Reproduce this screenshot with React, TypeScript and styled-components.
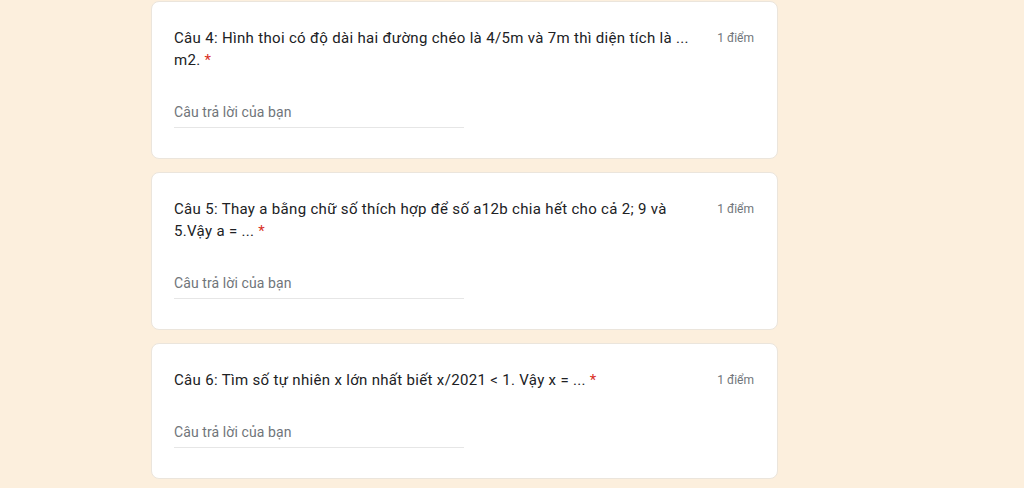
import styled, { createGlobalStyle } from 'styled-components';

const GlobalStyle = createGlobalStyle`
    html, body {
        margin: 0;
        padding: 0;
        background-color: #fcefdd;
        font-family: Roboto, 'Noto Sans', Arial, sans-serif;
    }
`;

const Page = styled.div`
    width: 627px;
    margin-left: 151px;
    padding-top: 1px;
    display: flex;
    flex-direction: column;
    gap: 13px;
`;

const Card = styled.div`
    background-color: #ffffff;
    border: 1px solid #ebe5dc;
    border-radius: 8px;
    padding: 25px 23px 30px 22px;
`;

const Header = styled.div`
    display: flex;
    align-items: flex-start;
    gap: 14px;
`;

const Question = styled.div`
    flex: 1;
    color: #202124;
    font-size: 15px;
    line-height: 22px;
    letter-spacing: 0.32px;
`;

const Required = styled.span`
    color: #d93025;
    margin-left: 4px;
`;

const Points = styled.div`
    color: #70757a;
    font-size: 12px;
    line-height: 22px;
    white-space: nowrap;
`;

const AnswerInput = styled.input`
    display: block;
    margin-top: 25px;
    width: 50%;
    height: 32px;
    box-sizing: border-box;
    padding: 0;
    border: none;
    border-bottom: 1px solid #e6e6e6;
    outline: none;
    background: transparent;
    font-family: inherit;
    font-size: 14px;
    letter-spacing: 0.1px;
    color: #202124;
    &::placeholder {
        color: #70757a;
    }
`;

const questions = [
    'Câu 4: Hình thoi có độ dài hai đường chéo là 4/5m và 7m thì diện tích là ... m2.',
    'Câu 5: Thay a bằng chữ số thích hợp để số a12b chia hết cho cả 2; 9 và 5.Vậy a = ...',
    'Câu 6: Tìm số tự nhiên x lớn nhất biết x/2021 < 1. Vậy x = ...',
];

const App = () => {
    return (
        <>
            <GlobalStyle />
            <Page>
                {questions.map((q, index) => (
                    <Card key={index}>
                        <Header>
                            <Question>
                                <span>{q}</span>
                                <Required>*</Required>
                            </Question>
                            <Points>1 điểm</Points>
                        </Header>
                        <AnswerInput type="text" placeholder="Câu trả lời của bạn" />
                    </Card>
                ))}
            </Page>
        </>
    );
};

export default App;
